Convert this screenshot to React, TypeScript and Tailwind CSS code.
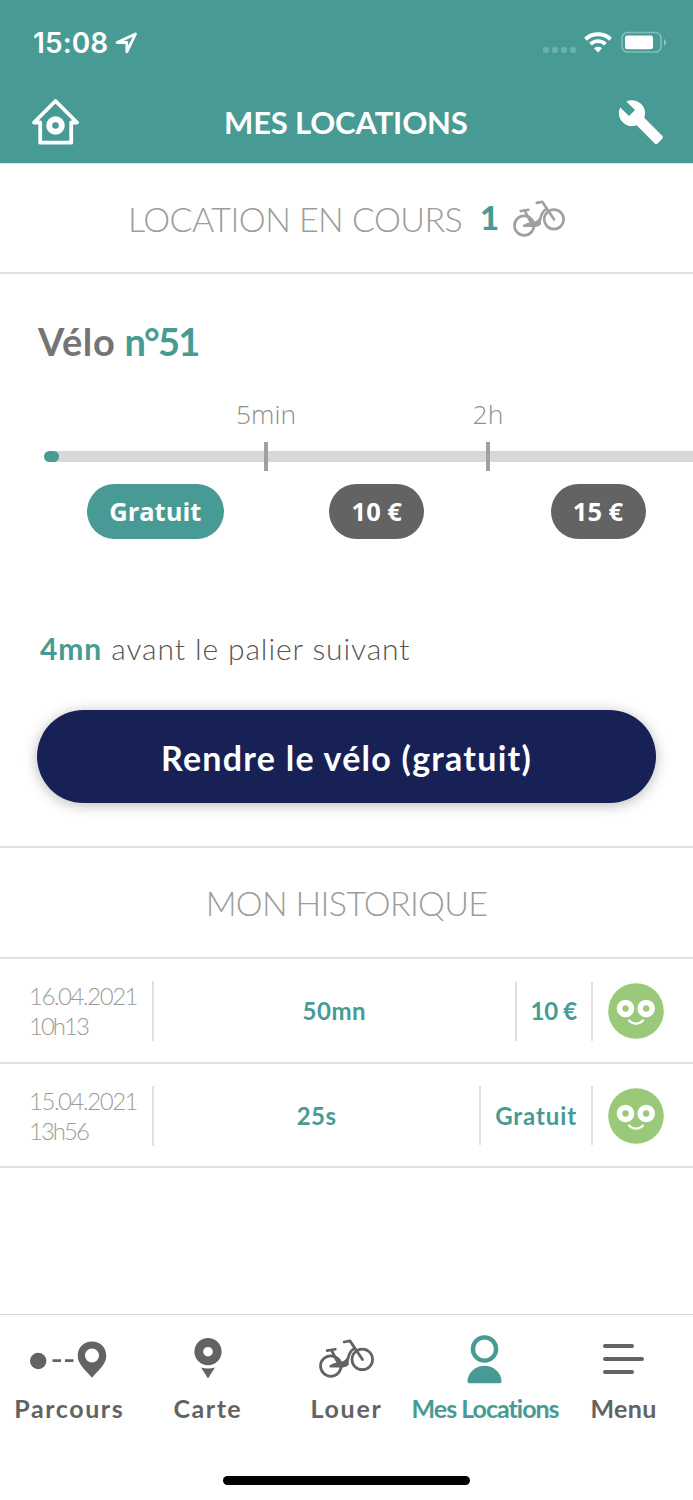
import { ReactNode } from "react";
import { MdBuild } from "react-icons/md";

interface IconProps {
  className?: string;
}

interface Rental {
  date: string;
  time: string;
  duration: string;
  price: ReactNode;
}

const rentals: Rental[] = [
  {
    date: "16.04.2021",
    time: "10h13",
    duration: "50mn",
    price: <span className="tracking-[-0.3px]">10 €</span>,
  },
  {
    date: "15.04.2021",
    time: "13h56",
    duration: "25s",
    price: <span className="tracking-[0.9px]">Gratuit</span>,
  },
];

function BikeIcon({ className }: IconProps) {
  return (
    <svg
      viewBox="0 0 54 38"
      className={className}
      fill="none"
      stroke="currentColor"
      strokeWidth="2.7"
      strokeLinecap="round"
      strokeLinejoin="round"
    >
      <circle cx="11.6" cy="26.4" r="10.1" />
      <circle cx="42.5" cy="19.9" r="10.1" />
      <path d="M24.700 2.800l5.700-1.100L42.700 20M8 11.300l8-1.400M12.300 11l6 11.500" />
      <path d="M34.400 9.300c-4.200 2.500-5.200 6.500-6.600 12.200" />
      <path
        d="M11.500 26.600c3-1.800 6-2.600 9.500-3 3.500-.4 5.500-1.600 6.500-3.400l.4 4.300c-.8 1.200-2.200 1.600-4.500 1.900z"
        fill="currentColor"
      />
    </svg>
  );
}

function HouseIcon() {
  return (
    <svg width="48" height="48" viewBox="0 0 48 48" fill="none">
      <path
        d="M3 24.500L24.500 3l21.500 21.500h-5.800V44.700H9.200V24.500z"
        stroke="white"
        strokeWidth="3.800"
        strokeLinejoin="round"
      />
      <circle cx="24.500" cy="27.500" r="6.300" stroke="white" strokeWidth="6" />
    </svg>
  );
}

function SmileyIcon() {
  return (
    <svg width="56" height="56" viewBox="0 0 56 56" className="shrink-0">
      <circle cx="28" cy="28" r="27.800" fill="#9aca79" />
      <circle cx="17.500" cy="25.500" r="6" fill="none" stroke="white" strokeWidth="5.600" />
      <circle cx="38.200" cy="25.500" r="6" fill="none" stroke="white" strokeWidth="5.600" />
      <path
        d="M21 37.500c4 4.200 10 4.200 14 0"
        fill="none"
        stroke="white"
        strokeWidth="2.200"
        strokeLinecap="round"
      />
    </svg>
  );
}

function StatusBar() {
  return (
    <div className="flex h-[82px] items-start justify-between pt-[28px] pr-[26px] pl-[33px] text-white">
      <div className="flex items-center font-['Inter',sans-serif] text-[28px] leading-[30px] font-semibold">
        <span className="w-[81px] tracking-[0.1px] whitespace-nowrap">15:08</span>
        <svg width="24" height="24" viewBox="0 0 24 24" fill="none">
          <path
            d="M21.500 3L3 11.500h9.800v9.300z"
            stroke="white"
            strokeWidth="2.800"
            strokeLinejoin="round"
          />
        </svg>
      </div>
      <div className="flex items-center pt-[3px]">
        <div className="mt-[15px] mr-[8px] flex gap-[3px]">
          <span className="size-[6px] rounded-xs bg-[#68b3ab]" />
          <span className="size-[6px] rounded-xs bg-[#68b3ab]" />
          <span className="size-[6px] rounded-xs bg-[#68b3ab]" />
          <span className="size-[6px] rounded-xs bg-[#68b3ab]" />
        </div>
        <svg width="28" height="21" viewBox="0 0 28 21" fill="none">
          <path d="M1.500 7.200c7-6.600 18-6.600 25 0" stroke="white" strokeWidth="4" />
          <path d="M6.500 12.100c4.200-4 10.800-4 15 0" stroke="white" strokeWidth="3.800" />
          <path d="M14 20.500l-4-4.300c2.400-1.900 5.600-1.900 8 0z" fill="white" />
        </svg>
        <svg width="46" height="22" viewBox="0 0 46 22" className="ml-[9px]">
          <rect x="1" y="1.500" width="39" height="19.500" rx="5.500" fill="none" stroke="#7fc0b9" strokeWidth="1.600" />
          <rect x="4" y="4.500" width="28" height="13.800" rx="2.500" fill="white" />
          <path d="M43 8c2.600 1.500 2.600 5.200 0 6.700z" fill="#91c7c1" />
        </svg>
      </div>
    </div>
  );
}

function Header() {
  return (
    <header className="h-[164px] border-b border-[#d9e3e1] bg-[#479b94]">
      <StatusBar />
      <div className="flex h-20 items-center justify-between pr-[28px] pl-[31px]">
        <HouseIcon />
        <h1 className="w-[248px] text-[31px] font-bold tracking-[-0.15px] whitespace-nowrap text-white">
          MES LOCATIONS
        </h1>
        <MdBuild className="size-[48px] text-white" />
      </div>
    </header>
  );
}

function Timeline() {
  return (
    <div className="pl-[44px] font-['Open_Sans',sans-serif]">
      <div className="flex h-[46px] text-[26.500px] leading-[36px] text-[#8f8f8b]">
        <span className="ml-[111px] w-[222px] text-center font-light">5min</span>
        <span className="w-[222px] text-center font-light">2h</span>
      </div>
      <div className="flex h-[29px] items-center">
        <div className="z-10 -mr-2 h-[11px] w-[15px] shrink-0 rounded-full bg-[#479b94]" />
        <div className="h-[11px] w-[213px] bg-[#d8d8d8]" />
        <div className="h-[29px] w-[4px] bg-[#a0a09c]" />
        <div className="h-[11px] w-[218px] bg-[#d8d8d8]" />
        <div className="h-[29px] w-[4px] bg-[#a0a09c]" />
        <div className="h-[11px] flex-1 bg-[#d8d8d8]" />
      </div>
      <div className="mt-[13px] flex text-[25.500px] leading-[55px] font-bold text-white">
        <div className="flex w-[223px] justify-center">
          <span className="w-[137px] rounded-full bg-[#479b94] text-center">Gratuit</span>
        </div>
        <div className="flex w-[221px] justify-center">
          <span className="w-[95px] rounded-full bg-[#636363] text-center">10 €</span>
        </div>
        <div className="-mr-4 flex w-[222px] shrink-0 justify-center">
          <span className="w-[95px] rounded-full bg-[#636363] text-center">15 €</span>
        </div>
      </div>
    </div>
  );
}

function HistoryRow({ date, time, duration, price }: Rental) {
  return (
    <li className="flex h-[104.600px] items-center border-b-2 border-[#e0e0dd] px-[29px] pt-[2px]">
      <div className="h-[60px] w-[125px] border-r-2 border-[#e0e0dd] text-[24px] leading-[30px] font-light text-[#9c9c99]">
        <p className="tracking-[-1.450px]">{date}</p>
        <p className="tracking-[-2px]">{time}</p>
      </div>
      <div className="flex-1 text-center tracking-[0.5px]">{duration}</div>
      <div className="flex h-[59px] items-center border-x-2 border-[#e0e0dd] px-[14px]">
        {price}
      </div>
      <div className="ml-[15px]">
        <SmileyIcon />
      </div>
    </li>
  );
}

interface TabProps {
  icon: ReactNode;
  children: ReactNode;
  active?: boolean;
}

function Tab({ icon, children, active }: TabProps) {
  return (
    <a
      href="#"
      className={
        active
          ? "flex w-1/5 flex-col items-center text-[#479b94]"
          : "flex w-1/5 flex-col items-center text-[#636363]"
      }
    >
      <span className="flex h-[76px] items-start pt-[20px]">{icon}</span>
      <span className="text-[25px] leading-[35px] font-bold whitespace-nowrap">{children}</span>
    </a>
  );
}

function TabBar() {
  return (
    <nav className="flex h-[186px] border-t border-[#d8d8d8] bg-white">
      <Tab
        icon={
          <svg width="78" height="50" viewBox="0 0 78 50" fill="currentColor">
            <circle cx="8.200" cy="26" r="8.200" />
            <path d="M22.500 24.300h8.500v2.600h-8.500zM35 24.300h8.500v2.600H35z" />
            <path
              fillRule="evenodd"
              d="M62 6.500c-8 0-14.300 6-14.300 14.200C47.700 29 55 34.500 62 42.800 69 34.500 76.300 29 76.300 20.700 76.300 12.500 70 6.500 62 6.500zm0 7a7 7 0 110 14 7 7 0 010-14z"
            />
          </svg>
        }
      >
        <span className="tracking-[1.600px]">Parcours</span>
      </Tab>
      <Tab
        icon={
          <svg width="28" height="48" viewBox="0 0 28 48" fill="currentColor">
            <circle cx="14" cy="16.700" r="9.200" fill="none" stroke="currentColor" strokeWidth="8.800" />
            <path d="M7 32.500c4.500 1.400 9.500 1.400 14 0L14 43.500z" />
          </svg>
        }
      >
        <span className="tracking-[1.500px]">Carte</span>
      </Tab>
      <Tab icon={<BikeIcon className="mt-[4px] h-[39px] w-[55px]" />}>
        <span className="tracking-[1.700px]">Louer</span>
      </Tab>
      <Tab
        active
        icon={
          <svg width="36" height="50" viewBox="0 0 36 50">
            <circle cx="17.500" cy="14" r="11.600" fill="none" stroke="currentColor" strokeWidth="4.400" />
            <path
              d="M.5 46.500c0-8.500 7.600-15.700 17-15.700s17 7.200 17 15.700q0 1.700-1.500 1.700h-31Q.5 48.200.5 46.500z"
              fill="currentColor"
            />
          </svg>
        }
      >
        <span className="tracking-[-1px]">Mes Locations</span>
      </Tab>
      <Tab
        icon={
          <span className="mt-[9px] flex w-[42px] flex-col gap-[9px]">
            <i className="h-[4px] w-[31px] rounded-full bg-current" />
            <i className="h-[4px] w-[41px] rounded-full bg-current" />
            <i className="h-[4px] w-[31px] rounded-full bg-current" />
          </span>
        }
      >
        <span className="tracking-[0.4px]">Menu</span>
      </Tab>
    </nav>
  );
}

export default function App() {
  return (
    <div className="flex h-[1500px] w-[693px] flex-col overflow-hidden bg-white font-['Lato',sans-serif]">
      <Header />

      {/* Current rental */}
      <section className="flex h-[110px] items-center border-b-2 border-[#e0e0dd] pl-[128px]">
        <h2 className="w-[352px] text-[34px] font-light tracking-[-0.550px] whitespace-nowrap text-[#9c9c99]">
          LOCATION EN COURS
        </h2>
        <span className="w-[33px] text-[33px] font-black text-[#479b94]">1</span>
        <BikeIcon className="h-[37px] w-[52px] text-[#a0a09c]" />
      </section>

      <section className="h-[574px] border-b-2 border-[#e0e0dd] pt-[41px]">
        <h3 className="h-[81px] pl-[38px] text-[38px] leading-[52px] font-bold text-[#747474]">
          <span className="tracking-[0.6px]">Vélo</span>{" "}
          <span className="tracking-[-1.900px] text-[#479b94]">n°51</span>
        </h3>
        <Timeline />
        <p className="mt-[91px] pl-[40px] text-[30px] leading-[36px] font-light tracking-[0.9px] whitespace-nowrap text-[#555555]">
          <span className="font-bold text-[#479b94]">4mn</span> avant le palier suivant
        </p>
        <button className="mx-[37px] mt-[44px] block h-[93px] w-[619px] rounded-full bg-[#172156] pt-[1px] text-[34px] font-bold tracking-[1.250px] text-white shadow-[0_2px_14px_rgba(0,0,0,0.28)]">
          Rendre le vélo (gratuit)
        </button>
      </section>

      {/* Past rentals */}
      <section className="flex-1">
        <h2 className="flex h-[111px] items-center justify-center border-b-2 border-[#e0e0dd] text-[34px] font-light tracking-[-0.700px] text-[#9c9c99]">
          MON HISTORIQUE
        </h2>
        <ul className="text-[24px] font-bold text-[#479b94]">
          {rentals.map((rental) => (
            <HistoryRow key={rental.date} {...rental} />
          ))}
        </ul>
      </section>

      <div className="relative">
        <TabBar />
        <div className="absolute bottom-[15px] left-[223px] h-[9px] w-[247px] rounded-full bg-black" />
      </div>
    </div>
  );
}
